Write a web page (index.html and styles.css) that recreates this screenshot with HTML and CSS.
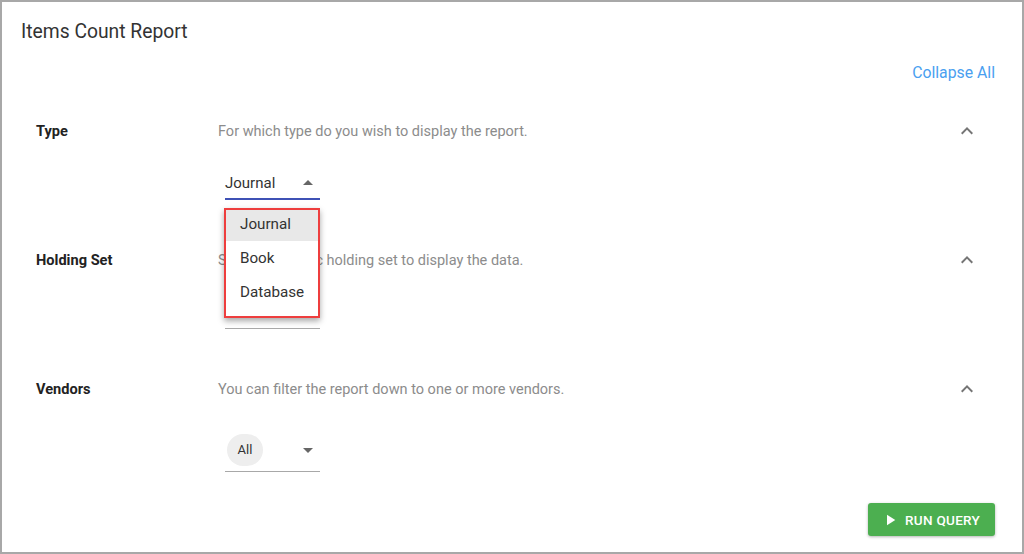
FILE: index.html
```html
<!DOCTYPE html>
<html lang="en">
<head>
    <meta charset="UTF-8">
    <title>Items Count Report</title>
    <link rel="stylesheet" href="styles.css">
</head>
<body>
    <div class="frame">
        <h1 class="title">Items Count Report</h1>
        <div class="toolbar">
            <a class="collapse-all" href="#">Collapse All</a>
        </div>

        <div class="section">
            <div class="section-label">Type</div>
            <div class="section-desc">For which type do you wish to display the report.</div>
            <svg class="chevron" viewBox="0 0 24 24" width="24" height="24"><path d="M12 8l-6 6 1.41 1.41L12 10.83l4.59 4.58L18 14z"/></svg>
            <div class="field">
                <div class="select focused">
                    <span class="select-value">Journal</span>
                    <svg class="caret" viewBox="0 0 24 24" width="24" height="24"><path d="M7 14l5-5 5 5z"/></svg>
                </div>
                <ul class="menu">
                    <li class="menu-item active">Journal</li>
                    <li class="menu-item">Book</li>
                    <li class="menu-item">Database</li>
                </ul>
            </div>
        </div>

        <div class="section">
            <div class="section-label">Holding Set</div>
            <div class="section-desc">Select a specific holding set to display the data.</div>
            <svg class="chevron" viewBox="0 0 24 24" width="24" height="24"><path d="M12 8l-6 6 1.41 1.41L12 10.83l4.59 4.58L18 14z"/></svg>
            <div class="field">
                <div class="select"></div>
            </div>
        </div>

        <div class="section">
            <div class="section-label">Vendors</div>
            <div class="section-desc">You can filter the report down to one or more vendors.</div>
            <svg class="chevron" viewBox="0 0 24 24" width="24" height="24"><path d="M12 8l-6 6 1.41 1.41L12 10.83l4.59 4.58L18 14z"/></svg>
            <div class="field">
                <div class="select chips">
                    <span class="chip">All</span>
                    <svg class="caret" viewBox="0 0 24 24" width="24" height="24"><path d="M7 10l5 5 5-5z"/></svg>
                </div>
            </div>
        </div>

        <div class="actions">
            <button class="run-btn">
                <svg viewBox="0 0 24 24" width="18" height="18"><path d="M8 5v14l11-7z"/></svg>
                RUN QUERY
            </button>
        </div>
    </div>
</body>
</html>
```

FILE: styles.css
```css
body {
    margin: 0;
    font-family: Roboto, "Liberation Sans", sans-serif;
    color: #333333;
    background: #ffffff;
}
.frame {
    width: 1024px;
    height: 554px;
    box-sizing: border-box;
    border: 2px solid #a8a8a8;
}
.title {
    margin: 0;
    padding: 18px 19px 0;
    font-size: 19.3px;
    font-weight: 400;
    line-height: 24px;
    color: #333333;
}
.toolbar {
    display: flex;
    justify-content: flex-end;
    margin-top: 19px;
    padding-right: 27px;
}
.collapse-all {
    font-size: 15.8px;
    line-height: 20px;
    color: #4a9ff0; /* link blue */
    text-decoration: none;
}
.section {
    display: grid;
    grid-template-columns: 182px 1fr 24px;
    grid-template-rows: 20px auto;
    row-gap: 27px;
    align-items: center;
    padding: 0 43px 0 34px;
    margin-top: 38px;
}
.section + .section {
    margin-top: 50px;
}
.section-label {
    font-size: 14.6px;
    font-weight: 700;
    color: #222222;
}
.section-desc {
    font-size: 14.5px;
    color: #8c8c8c;
}
.chevron {
    fill: #757575;
}
.field {
    grid-column: 2;
    position: relative;
    width: 95px;
    margin-left: 7px;
}
.select {
    display: flex;
    align-items: center;
    justify-content: space-between;
    height: 31px;
    border-bottom: 1px solid #a8a8a8;
}
.select.focused {
    height: 30px;
    border-bottom: 2px solid #3f51b5; /* focused underline */
}
.select-value {
    font-size: 15px;
    color: #333333;
}
.caret {
    fill: #666666;
}
.select.chips {
    height: 46px;
    align-items: flex-start;
    padding-top: 8px;
    box-sizing: border-box;
}
.chips .caret {
    margin-top: 4px;
}
.chip {
    display: inline-block;
    width: 36px;
    height: 32px;
    margin-left: 2px;
    border-radius: 16px;
    background: #eeeeee;
    font-size: 13px;
    line-height: 32px;
    text-align: center;
    color: #333333;
}
.menu {
    position: absolute;
    top: 40px;
    left: -1px;
    width: 92px;
    margin: 0;
    padding: 0 0 7px;
    list-style: none;
    background: #ffffff;
    border: 2px solid #ee3e3e; /* red callout */
    box-shadow: 0 3px 6px rgba(0, 0, 0, 0.35);
}
.menu-item {
    height: 34px;
    padding-left: 14px;
    font-size: 15.2px;
    line-height: 34px;
    color: #333333;
}
.menu-item.active {
    height: 31px;
    line-height: 29px;
    background: #e8e8e8;
}
.actions {
    display: flex;
    justify-content: flex-end;
    padding-right: 27px;
    margin-top: 31px;
}
.run-btn {
    display: flex;
    align-items: center;
    gap: 6px;
    width: 127px;
    height: 33px;
    padding: 0 0 0 13px;
    border: none;
    border-radius: 3px;
    background: #4caf50;
    color: #ffffff;
    font-family: Roboto, "Liberation Sans", sans-serif;
    font-size: 13.5px;
    font-weight: 500;
    letter-spacing: 0.3px;
    box-shadow: 0 1px 3px rgba(0, 0, 0, 0.3);
    cursor: pointer;
}
.run-btn svg {
    fill: #ffffff;
}
```
